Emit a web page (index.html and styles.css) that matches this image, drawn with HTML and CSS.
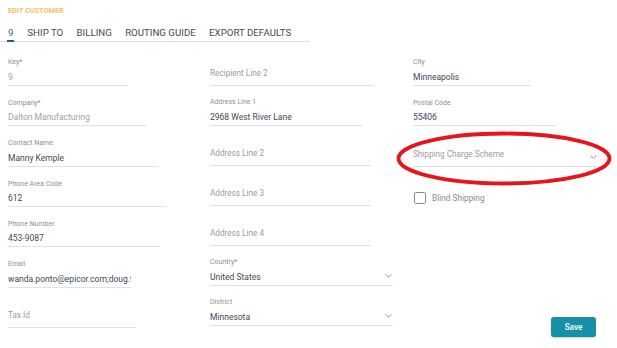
FILE: index.html
```html
<!DOCTYPE html>
<html lang="en">
    <head>
        <meta charset="UTF-8">
        <title> Edit Customer </title>
        <link rel="stylesheet" href="styles.css">
    </head>
    <body>

        <header>
            <h1 class="pageTitle"> EDIT CUSTOMER </h1>
            <nav class="tabs">
                <span class="tab active">9</span>
                <span class="tab">SHIP TO</span>
                <span class="tab">BILLING</span>
                <span class="tab">ROUTING GUIDE</span>
                <span class="tab">EXPORT DEFAULTS</span>
            </nav>
        </header>

        <main class="formGrid">

            <!-- Colonne 1 -->
            <section class="col col1">
                <div class="field w120">
                    <label>Key*</label>
                    <div class="value disabled">9</div>
                </div>
                <div class="field w138">
                    <label>Company*</label>
                    <div class="value disabled">Dalton Manufacturing</div>
                </div>
                <div class="field w150">
                    <label>Contact Name</label>
                    <div class="value">Manny Kemple</div>
                </div>
                <div class="field w158">
                    <label>Phone Area Code</label>
                    <div class="value">612</div>
                </div>
                <div class="field w152">
                    <label>Phone Number</label>
                    <div class="value">453-9087</div>
                </div>
                <div class="field w123">
                    <label>Email</label>
                    <div class="value clip">wanda.ponto@epicor.com;doug.ta</div>
                </div>
                <div class="field w128">
                    <div class="ph">Tax Id</div>
                </div>
            </section>

            <!-- Colonne 2 -->
            <section class="col col2">
                <div class="field w164">
                    <div class="ph">Recipient Line 2</div>
                </div>
                <div class="field w152">
                    <label>Address Line 1</label>
                    <div class="value">2968 West River Lane</div>
                </div>
                <div class="field w161">
                    <div class="ph">Address Line 2</div>
                </div>
                <div class="field w161">
                    <div class="ph">Address Line 3</div>
                </div>
                <div class="field w161">
                    <div class="ph">Address Line 4</div>
                </div>
                <div class="field select w183">
                    <label>Country*</label>
                    <div class="value">United States</div>
                    <svg class="chevron" width="7" height="4" viewBox="0 0 7 4"><path d="M0.6 0.6 L3.5 3.2 L6.4 0.6" fill="none" stroke="#8a8a8a" stroke-width="0.9"/></svg>
                </div>
                <div class="field select w183">
                    <label>District</label>
                    <div class="value">Minnesota</div>
                    <svg class="chevron" width="7" height="4" viewBox="0 0 7 4"><path d="M0.6 0.6 L3.5 3.2 L6.4 0.6" fill="none" stroke="#8a8a8a" stroke-width="0.9"/></svg>
                </div>
            </section>

            <!-- Colonne 3 -->
            <section class="col col3">
                <div class="field w118">
                    <label>City</label>
                    <div class="value">Minneapolis</div>
                </div>
                <div class="field w143">
                    <label>Postal Code</label>
                    <div class="value">55406</div>
                </div>
                <div class="field select w185">
                    <div class="ph">Shipping Charge Scheme</div>
                    <svg class="chevron" width="7" height="4" viewBox="0 0 7 4"><path d="M0.6 0.6 L3.5 3.2 L6.4 0.6" fill="none" stroke="#8a8a8a" stroke-width="0.9"/></svg>
                </div>

                <label class="checkRow">
                    <span class="checkBox"></span>
                    <span>Blind Shipping</span>
                </label>

                <button class="boutonSave" type="button">Save</button>
            </section>

        </main>

        <!-- Annotation rouge autour du champ -->
        <svg class="annotation" width="216" height="55" viewBox="0 0 216 55">
            <ellipse cx="108" cy="27.5" rx="105.5" ry="25" fill="none" stroke="#e8141c" stroke-width="3.8"/>
        </svg>

    </body>
</html>
```

FILE: styles.css
```css
/* Général */
html, body { margin: 0; padding: 0; background: #ffffff; }
body { font-family: 'Roboto', 'Liberation Sans', sans-serif; color: #3d4a5c; width: 617px; height: 348px; overflow: hidden; position: relative; }

/* En-tête */
.pageTitle
{
    margin: 0;
    padding: 6.4px 0 0 8px;
    font-size: 7.3px;
    line-height: 10px;
    font-weight: 700;
    color: #f5c164;
}

.tabs
{
    display: flex;
    align-items: flex-end;
    gap: 13.3px;
    width: 302px;
    margin-top: 10.2px;
    padding-left: 8px;
    border-bottom: 1px solid #dcdcdc;
}
.tab { font-size: 9.7px; line-height: 12px; color: #4a4a4a; padding-bottom: 2px; }
.tab.active
{
    color: #1c6f86;
    border-bottom: 2px solid #1f5f72;
    margin-bottom: -1px;
    padding: 0 0.6px 1px;
    margin-left: -0.6px;
}

/* Grille du formulaire */
.formGrid
{
    display: grid;
    grid-template-columns: 202px 203px 1fr;
    margin: 15.8px 0 0 8px;
}
.col { display: flex; flex-direction: column; }

.field
{
    position: relative;
    box-sizing: border-box;
    padding-bottom: 2px;
    border-bottom: 1px solid #e2e2e2;
    margin-bottom: 11.9px;
}
.col2 .field { margin-bottom: 11.5px; }

.field label
{
    display: block;
    font-size: 7px;
    line-height: 10px;
    margin-bottom: 3.5px;
    color: #8f8f8f;
}
.field .value
{
    font-size: 8.5px;
    line-height: 12px;
    color: #3e4a5a;
    white-space: nowrap;
    overflow: hidden;
}
.field .value.disabled { color: #a2a2a2; }
.field .ph
{
    box-sizing: border-box;
    height: 25.5px;
    padding-top: 9.4px;
    font-size: 8.2px;
    line-height: 12px;
    color: #9c9c9c;
}

.select .value { padding-right: 12px; }
.chevron { position: absolute; right: 1.5px; bottom: 6.5px; }

/* Largeurs des champs */
.w118 { width: 118px; }
.w120 { width: 120px; }
.w123 { width: 123px; }
.w128 { width: 128px; }
.w138 { width: 138px; }
.w143 { width: 143px; }
.w150 { width: 150px; }
.w152 { width: 152px; }
.w158 { width: 158px; }
.w161 { width: 161px; }
.w164 { width: 164px; }
.w183 { width: 183px; }
.w185 { width: 185px; }

/* Case à cocher */
.checkRow
{
    display: flex;
    align-items: center;
    gap: 6px;
    margin-top: 13.5px;
    margin-left: 1px;
    font-size: 8.3px;
    line-height: 12px;
    color: #8a8a8a;
}
.checkBox
{
    box-sizing: border-box;
    width: 12px;
    height: 12px;
    border: 1.4px solid #8a8a8a;
    border-radius: 1.5px;
}

/* Bouton */
.boutonSave
{
    align-self: flex-start;
    margin: 112.5px 0 0 138px;
    width: 45px;
    height: 20px;
    padding: 0;
    border: none;
    border-radius: 3px;
    background-color: #168fa9;
    color: #ffffff;
    font-family: 'Roboto', sans-serif;
    font-size: 8.2px;
    font-weight: 500;
    box-shadow: 0 1px 1.5px rgba(0, 0, 0, 0.2);
}

/* Annotation */
.annotation { position: absolute; left: 396px; top: 131px; }
```
